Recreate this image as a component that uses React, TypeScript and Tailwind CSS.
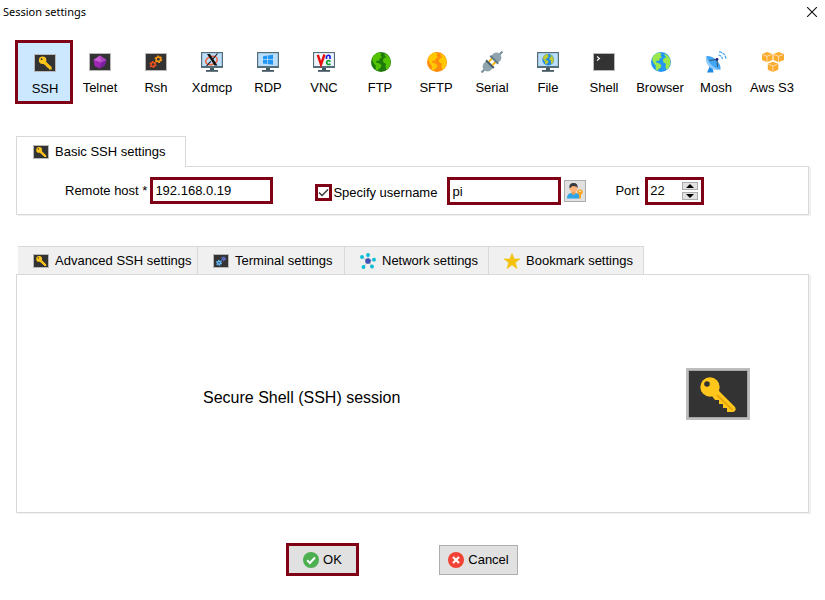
import { useState } from "react";
import type { ReactNode } from "react";

/* ---------- icons ---------- */

function Screen({ children }: { children: ReactNode }) {
  return (
    <svg viewBox="0 0 22 18" className="h-[18px] w-[22px]" aria-hidden="true">
      <rect x="0.5" y="0.5" width="21" height="17" fill="#333" stroke="#b8b8b8" />
      {children}
    </svg>
  );
}

function KeyShape() {
  return (
    <g>
      <path d="M9.2 7 18 15.400 18.300 18.600 14.400 18.600 14.200 17 12.400 16.800 12.200 15.200 10.500 14.900 10.300 13.200 8.700 12.900 6.300 10z" fill="#ffc61c" />
      <path d="M9.600 10.300 17 17.400" stroke="#e8a60c" strokeWidth="0.700" />
      <circle cx="5.600" cy="6" r="5.200" fill="#ffc61c" />
      <circle cx="4.200" cy="4.400" r="1.300" fill="#333" />
    </g>
  );
}

function KeyIcon() {
  return (
    <Screen>
      <g transform="translate(4.600 2) scale(.72)">
        <KeyShape />
      </g>
    </Screen>
  );
}

function SmallKeyIcon() {
  return (
    <svg viewBox="0 0 16 14" className="h-3.5 w-4 shrink-0" aria-hidden="true">
      <rect x="0.5" y="0.5" width="15" height="13" fill="#333" stroke="#b8b8b8" />
      <g transform="translate(3 1.600) scale(.56)">
        <KeyShape />
      </g>
    </svg>
  );
}

function LargeKeyIcon() {
  return (
    <svg viewBox="0 0 64 52" className="h-[52px] w-16 shrink-0" role="img" aria-label="SSH key">
      <rect width="64" height="52" fill="#bdbdbd" />
      <rect x="2.5" y="2.5" width="59" height="47" fill="#333" stroke="#a5a5a5" />
      <path d="M32 22 49 39Q51 43 47 44H41V40H37V36H33V32H29L26 28z" fill="#ffc61c" />
      <path d="M31 27 46.500 42" stroke="#e8a60c" strokeWidth="1.800" />
      <circle cx="24" cy="19" r="9.700" fill="#ffc61c" />
      <circle cx="21" cy="16" r="2.800" fill="#333" />
    </svg>
  );
}

function Gear({ x, y, r, color }: { x: number; y: number; r: number; color: string }) {
  return (
    <g transform={`translate(${x} ${y})`} fill="none" stroke={color}>
      <circle r={r} strokeWidth="1.500" />
      <circle r={r + 1} strokeWidth="1.200" strokeDasharray={`${(r + 1) * 0.55} ${(r + 1) * 0.5}`} />
    </g>
  );
}

function TelnetIcon() {
  return (
    <Screen>
      <path d="M11 2.500 17.500 7 15.500 12.500 10.500 15.500 5.500 13 4.500 7z" fill="#9c27b0" />
      <path d="M11 2.500 12.500 9.500 4.500 7z" fill="#c65bd8" />
      <path d="M11 2.500 17.500 7 12.500 9.500z" fill="#ab47bc" />
      <path d="M12.500 9.500 17.500 7 15.500 12.500 10.500 15.500z" fill="#7b1fa2" />
    </Screen>
  );
}

function RshIcon() {
  return (
    <Screen>
      <Gear x={8} y={11.5} r={2} color="#f4511e" />
      <Gear x={13.4} y={6.3} r={2.2} color="#ff9812" />
    </Screen>
  );
}

function Monitor({ children }: { children: ReactNode }) {
  return (
    <svg viewBox="0 0 22 20" className="h-5 w-[22px]" aria-hidden="true">
      <rect width="22" height="16" fill="#546e7a" />
      <rect x="1.200" y="1.200" width="19.600" height="12.800" fill="#bbdefb" />
      <rect x="9" y="16" width="4" height="2.500" fill="#455a64" />
      <rect x="5" y="18" width="12" height="1.800" fill="#455a64" />
      {children}
    </svg>
  );
}

function XdmcpIcon() {
  return (
    <Monitor>
      <ellipse cx="10.500" cy="8.500" rx="6" ry="4" fill="none" stroke="#f0643c" strokeWidth="1.500" transform="rotate(-20 10.500 8.500)" />
      <path d="M6 2h3L16.500 13.500h-3z" fill="#111" />
      <path d="M16.500 1.500 11.500 7.500M9.800 9.300 5.500 14" stroke="#111" strokeWidth="1.100" />
    </Monitor>
  );
}

function RdpIcon() {
  return (
    <Monitor>
      <path d="M6 4.200 10 3.600V7.300H6zM10.700 3.500 16 2.800V7.300H10.700zM6 8H10V12L6 11.400zM10.700 8H16V12.800L10.700 12.100z" fill="#2196f3" />
    </Monitor>
  );
}

function VncIcon() {
  return (
    <Monitor>
      <rect x="1.200" y="1.200" width="19.600" height="12.800" fill="#eef4fa" />
      <path d="M4.800 2.800 8 12.500 11.500 2.500" fill="none" stroke="#e60f0f" strokeWidth="2.400" />
      <path d="M13.500 7V4.500Q15.500 2 17 4.300V7" fill="none" stroke="#1414e6" strokeWidth="1.600" />
      <path d="M17.500 9.500Q14 7.500 13.600 10.500 14.200 13.500 17.600 12" fill="none" stroke="#0aa02d" strokeWidth="1.700" />
    </Monitor>
  );
}

function GlobeShape({ sea, land }: { sea: string; land: string }) {
  return (
    <g>
      <circle cx="10" cy="10" r="10" fill={sea} />
      <path d="M1.300 5.800Q3.300 1.800 7.800.5L10.500 1.500 9.500 3.700 11 5.200 8.700 6.500 8.200 8.800 5.300 8.700 5.200 10.400 8 11.200 10.500 13.200 9.600 15.700 7.400 17.200 6.500 19 4.700 17.200 4.700 13.500 2.500 11 1.500 8.500z" fill={land} />
      <path d="M13 1.500Q17.500 3 19.200 7.300L19.500 12 17.300 16.500 15 17.500 14.500 14.200 15 11.700 12.500 10.500 11.800 7.800 13.600 5.800 15.600 5.500 14 4z" fill={land} />
    </g>
  );
}

function GlobeIcon({ sea, land }: { sea: string; land: string }) {
  return (
    <svg viewBox="0 0 20 20" className="ml-0.5 size-5" aria-hidden="true">
      <GlobeShape sea={sea} land={land} />
    </svg>
  );
}

function FileIcon() {
  return (
    <Monitor>
      <g transform="translate(5.300 1.700) scale(.59)">
        <GlobeShape sea="#1e88e5" land="#c0ca33" />
      </g>
    </Monitor>
  );
}

function SerialIcon() {
  return (
    <svg viewBox="0 0 22 22" className="size-[22px]" aria-hidden="true">
      <path d="M.5 21.500 3.500 18.500M18.500 3.500 21.500.5" stroke="#78909c" strokeWidth="2" />
      <path d="M2.500 12.500 5.500 9.700 12.300 16.500 9.500 19.500Q6 21.500 3 19 .5 16 2.500 12.500z" fill="#90a4ae" />
      <path d="M5 9.200 12.800 17" stroke="#455a64" strokeWidth="2" />
      <path d="M8 10.500 12 6.500M11.500 14 15.500 10" stroke="#ffb300" strokeWidth="1.800" />
      <path d="M9.700 5.500 12.500 2.500Q16 .5 19 3 21.500 6 19.500 9.500L16.500 12.300z" fill="#90a4ae" />
      <path d="M9.300 4.800 17.200 12.700" stroke="#607d8b" strokeWidth="2" />
    </svg>
  );
}

function ShellIcon() {
  return (
    <Screen>
      <path d="M4 3.500 6.500 5.500 4 7.500" fill="none" stroke="#fff" strokeWidth="1.100" />
    </Screen>
  );
}

function MoshIcon() {
  return (
    <svg viewBox="0 0 22 22" className="size-[22px]" aria-hidden="true">
      <path d="M5 15 2 21.500H8.500L7.500 16z" fill="#1e88e5" />
      <path d="M1.500 5Q-.5 11 4 15.500 9 20.500 15.500 18.500z" fill="#90caf9" />
      <path d="M1.500 5Q6.500 4.500 11.500 9 16 13.500 15.500 18.500 10 17.500 6 13.500 2 9 1.500 5z" fill="#42a5f5" />
      <path d="M4.500 9.500 12 8.500 12.500 16" fill="none" stroke="#37474f" strokeWidth=".9" />
      <circle cx="12" cy="8.500" r="1.400" fill="#1a237e" />
      <path d="M13.500 4Q16.800 4.500 17.500 8M14 .8Q20 1.500 21 8" fill="none" stroke="#42a5f5" strokeWidth="1.200" strokeDasharray="3 .7" />
    </svg>
  );
}

function Cube({ x, y }: { x: number; y: number }) {
  return (
    <g transform={`translate(${x} ${y})`}>
      <path d="M5 0 10.500 2V8L5 10.300 0 8V2z" fill="#fbab2e" />
      <path d="M.5 2.500 5 4.300 9.500 2.500M5 4.300V10" fill="none" stroke="#fff" strokeWidth=".6" />
    </g>
  );
}

function AwsIcon() {
  return (
    <svg viewBox="0 0 22 20" className="ml-0.5 h-5 w-[22px]" aria-hidden="true">
      <Cube x={0} y={0} />
      <Cube x={11.5} y={0} />
      <Cube x={5.8} y={9.7} />
    </svg>
  );
}

function TerminalIcon() {
  return (
    <svg viewBox="0 0 16 14" className="h-3.5 w-4 shrink-0" aria-hidden="true">
      <rect x="0.500" y="0.500" width="15" height="13" fill="#333" stroke="#b8b8b8" />
      <Gear x={6} y={8.8} r={1.5} color="#64b5f6" />
      <Gear x={10.5} y={4.8} r={1} color="#5c6bc0" />
    </svg>
  );
}

function NetworkIcon() {
  return (
    <svg viewBox="0 0 16 16" className="size-4 shrink-0" aria-hidden="true">
      <path d="M8 8V2M8 8 2 4M8 8 14 6.500M8 8 3.500 14M8 8 12.500 13.500" stroke="#b0bec5" strokeWidth=".8" />
      <g fill="#00bcd4">
        <circle cx="8" cy="2" r="1.900" />
        <circle cx="2" cy="4" r="1.900" />
        <circle cx="14" cy="6.700" r="1.900" />
        <circle cx="3.500" cy="14" r="1.900" />
        <circle cx="12" cy="13.500" r="1.900" />
      </g>
      <circle cx="8" cy="8" r="2.800" fill="#3f51b5" />
    </svg>
  );
}

function StarIcon() {
  return (
    <svg viewBox="0 0 16 16" className="size-4 shrink-0" aria-hidden="true">
      <path d="M8 .5 10.200 6H16L11.300 9.500 13 15.500 8 12 3 15.500 4.700 9.500 0 6H5.800z" fill="#f4c20d" stroke="#f4c20d" strokeWidth=".6" />
    </svg>
  );
}

function UserKeyIcon() {
  return (
    <svg viewBox="0 0 18 18" className="size-[18px]" aria-hidden="true">
      <path d="M1 16.500Q1 11.500 5 11L8 12.500 10 11 13 12V16.500z" fill="#2fa4e7" />
      <path d="M5.500 9H9.500V11.500L7.500 13 5.500 11.500z" fill="#f09a4a" />
      <circle cx="7.500" cy="6.500" r="3.800" fill="#ffb27a" />
      <path d="M3.500 6.500Q2.500 1 7.500 1 12.500 1 11.500 6.500L10.500 4.500 6.500 4Z" fill="#37393d" />
      <circle cx="14" cy="10" r="2.800" fill="#f9a825" />
      <path d="M13 11h2v5.500h-2z" fill="#f9a825" />
      <circle cx="14" cy="9.300" r=".8" fill="#fff" />
    </svg>
  );
}

function OkIcon() {
  return (
    <svg viewBox="0 0 16 16" className="size-4" aria-hidden="true">
      <circle cx="8" cy="8" r="8" fill="#4caf50" />
      <path d="M4.200 8.300 6.900 11 12 5.500" fill="none" stroke="#fff" strokeWidth="2" />
    </svg>
  );
}

function CancelIcon() {
  return (
    <svg viewBox="0 0 16 16" className="size-4" aria-hidden="true">
      <circle cx="8" cy="8" r="8" fill="#f44336" />
      <path d="M5 5 11 11M11 5 5 11" stroke="#fff" strokeWidth="2.200" />
    </svg>
  );
}

/* ---------- data ---------- */

const sessions: { name: string; icon: ReactNode }[] = [
  { name: "SSH", icon: <KeyIcon /> },
  { name: "Telnet", icon: <TelnetIcon /> },
  { name: "Rsh", icon: <RshIcon /> },
  { name: "Xdmcp", icon: <XdmcpIcon /> },
  { name: "RDP", icon: <RdpIcon /> },
  { name: "VNC", icon: <VncIcon /> },
  { name: "FTP", icon: <GlobeIcon sea="#1f7a0c" land="#55c400" /> },
  { name: "SFTP", icon: <GlobeIcon sea="#ff8c0a" land="#ffc800" /> },
  { name: "Serial", icon: <SerialIcon /> },
  { name: "File", icon: <FileIcon /> },
  { name: "Shell", icon: <ShellIcon /> },
  { name: "Browser", icon: <GlobeIcon sea="#2196f3" land="#9be84a" /> },
  { name: "Mosh", icon: <MoshIcon /> },
  { name: "Aws S3", icon: <AwsIcon /> },
];

const tabs: { name: string; icon: ReactNode; width: string }[] = [
  { name: "Advanced SSH settings", icon: <SmallKeyIcon />, width: "w-[180px]" },
  { name: "Terminal settings", icon: <TerminalIcon />, width: "w-[147px]" },
  { name: "Network settings", icon: <NetworkIcon />, width: "w-36" },
  { name: "Bookmark settings", icon: <StarIcon />, width: "w-[155px]" },
];

const field = "border-[3px] border-[#800016] bg-white outline-none";

/* ---------- window ---------- */

export default function App() {
  const [selected, setSelected] = useState("SSH");
  const [host, setHost] = useState("192.168.0.19");
  const [useName, setUseName] = useState(true);
  const [user, setUser] = useState("pi");
  const [port, setPort] = useState(22);

  return (
    <main className="min-h-screen bg-white pb-6 font-['Liberation_Sans',Arial,sans-serif] text-[13px] leading-4 text-black">
      <header className="flex h-6 items-center justify-between pr-2 pl-[3px]">
        <h1 className="font-['Noto_Sans','Open_Sans',sans-serif] text-[11px]">Session settings</h1>
        <button type="button" aria-label="Close">
          <svg viewBox="0 0 10 10" className="size-2.5" aria-hidden="true">
            <path d="M0 0 10 10M10 0 0 10" stroke="#111" strokeWidth="1.100" />
          </svg>
        </button>
      </header>

      <nav className="mt-4 flex pl-[15px]" aria-label="Session type">
        {sessions.map(({ name, icon }) => (
          <button
            key={name}
            type="button"
            aria-pressed={selected === name}
            onClick={() => setSelected(name)}
            className={`flex h-16 shrink-0 flex-col items-center gap-1.5 whitespace-nowrap ${
              selected === name ? "w-[58px] -mr-px border-[3px] border-[#800016] bg-[#cce8ff] pt-2 pl-0.5" : "w-14 pt-2.5"
            }`}
          >
            <span className="flex h-6 items-center">{icon}</span>
            <span>{name}</span>
          </button>
        ))}
      </nav>

      <section className="mr-4 ml-4 mt-8">
        <h2 className="relative -mb-px flex h-[31px] w-[170px] items-center gap-1.5 border border-b-0 border-[#d9d9d9] bg-white pl-4">
          <SmallKeyIcon />
          Basic SSH settings
        </h2>
        <div className="flex h-[49px] items-start border border-[#d9d9d9] pt-2.5 pl-12 shadow-[2px_1px_0_#f0f0f0]">
          <label htmlFor="host" className="mt-1.5 mr-[3px] shrink-0">Remote host *</label>
          <input
            id="host"
            value={host}
            onChange={(e) => setHost(e.target.value)}
            className={`${field} h-[27px] w-[123px] shrink-0 px-0.5`}
          />
          <label className="mt-[7px] ml-[42px] flex shrink-0 items-center gap-px">
            <span className="grid size-[17px] place-items-center">
              <input
                type="checkbox"
                checked={useName}
                onChange={(e) => setUseName(e.target.checked)}
                className="peer col-start-1 row-start-1 size-[17px] appearance-none border-[3px] border-[#800016] bg-white"
              />
              <svg viewBox="0 0 11 11" className="pointer-events-none invisible col-start-1 row-start-1 size-[11px] peer-checked:visible" aria-hidden="true">
                <path d="M1 5.500 4 8.500 10 2.500" fill="none" stroke="#333" strokeWidth="1.300" />
              </svg>
            </span>
            Specify username
          </label>
          <input
            aria-label="Username"
            value={user}
            onChange={(e) => setUser(e.target.value)}
            className={`${field} ml-2.5 h-7 w-[114px] shrink-0 px-0.5`}
          />
          <button type="button" aria-label="Choose user" className="mt-[3px] ml-[3px] grid size-[22px] shrink-0 place-items-center border border-[#adadad] bg-[#e1e1e1]">
            <UserKeyIcon />
          </button>
          <label htmlFor="port" className="mt-1.5 mr-1.5 ml-[29px] shrink-0">Port</label>
          <div className={`${field} flex h-7 w-[59px] shrink-0 items-center pr-[3px] pl-0.5`}>
            <input
              id="port"
              inputMode="numeric"
              value={port}
              onChange={(e) => setPort(Number(e.target.value) || 0)}
              className="w-8 min-w-0 flex-1 outline-none"
            />
            <span className="flex flex-col gap-0.5">
              <button type="button" aria-label="Increase port" onClick={() => setPort(port + 1)} className="grid h-2 w-4 place-items-center border border-[#adadad] bg-[#e1e1e1]">
                <svg viewBox="0 0 8 4" className="h-1 w-2" aria-hidden="true"><path d="M4 0 8 4H0z" /></svg>
              </button>
              <button type="button" aria-label="Decrease port" onClick={() => setPort(port - 1)} className="grid h-2 w-4 place-items-center border border-[#adadad] bg-[#e1e1e1]">
                <svg viewBox="0 0 8 4" className="h-1 w-2" aria-hidden="true"><path d="M4 4 8 0H0z" /></svg>
              </button>
            </span>
          </div>
        </div>
      </section>

      <section className="mr-4 ml-4 mt-[31px]">
        <div className="flex pl-0.5" role="tablist">
          {tabs.map(({ name, icon, width }) => (
            <button
              key={name}
              type="button"
              role="tab"
              className={`${width} flex h-7 shrink-0 items-center gap-1.5 border-t border-r border-[#d9d9d9] bg-[#f0f0f0] pl-[15px] whitespace-nowrap`}
            >
              {icon}
              {name}
            </button>
          ))}
        </div>
        <div className="flex h-[239px] items-center justify-between border border-[#d9d9d9] pr-[58px] pl-[186px] shadow-[2px_1px_0_#f0f0f0]">
          <p className="pt-2 text-[16px] leading-5">Secure Shell (SSH) session</p>
          <LargeKeyIcon />
        </div>
      </section>

      <footer className="mt-[30px] flex items-center justify-center gap-20 pr-[21px]">
        <button type="button" className="flex h-[33px] w-[73px] items-center justify-center gap-1 border-[3px] border-[#800016] bg-[#e1e1e1]">
          <OkIcon />
          OK
        </button>
        <button type="button" className="flex h-[30px] w-[79px] items-center justify-center gap-1 border border-[#adadad] bg-[#e1e1e1]">
          <CancelIcon />
          Cancel
        </button>
      </footer>
    </main>
  );
}
